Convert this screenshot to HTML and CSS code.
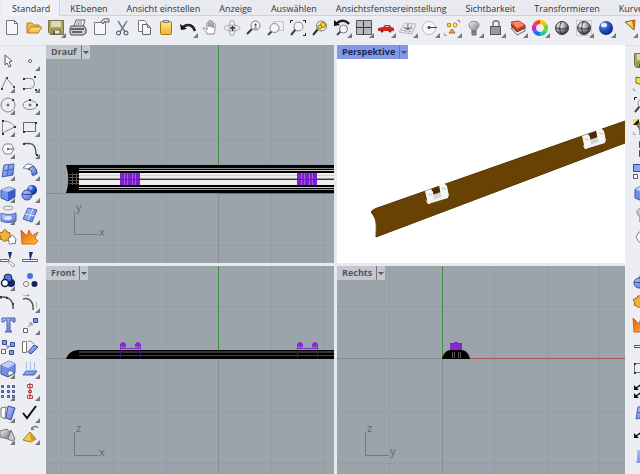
FILE: index.html
```
<!DOCTYPE html>
<html lang="de">
<head>
    <meta charset="UTF-8">
    <meta name="viewport" content="width=device-width, initial-scale=1.0">
    <title>Ansichtsfenster</title>
    <link rel="stylesheet" href="styles.css">
</head>
<body>

    <!-- Icon set, every icon on a 22 x 22 grid -->
    <svg class="sprite" aria-hidden="true">
        <defs>
            <linearGradient id="blue" x1="0" y1="0" x2="1" y2="1"><stop offset="0" stop-color="#b9c9fa"/><stop offset="1" stop-color="#5273d6"/></linearGradient>
            <linearGradient id="gold" x1="0" y1="0" x2="0" y2="1"><stop offset="0" stop-color="#ffe78a"/><stop offset="1" stop-color="#eeb53a"/></linearGradient>
            <linearGradient id="fire" x1="0" y1="0" x2="1" y2="1"><stop offset="0" stop-color="#e85d10"/><stop offset="1" stop-color="#ffc233"/></linearGradient>
            <linearGradient id="steel" x1="0" y1="0" x2="1" y2="1"><stop offset="0" stop-color="#f4f4f4"/><stop offset="1" stop-color="#777"/></linearGradient>
            <radialGradient id="ball" cx=".35" cy=".3" r=".7"><stop offset="0" stop-color="#fff"/><stop offset=".5" stop-color="#aaa"/><stop offset="1" stop-color="#333"/></radialGradient>
            <radialGradient id="blueball" cx=".35" cy=".3" r=".7"><stop offset="0" stop-color="#cfe0ff"/><stop offset=".4" stop-color="#2e62cc"/><stop offset="1" stop-color="#0a2c80"/></radialGradient>
        </defs>
        <symbol id="new" viewBox="0 0 22 22"><path d="M5.500 3.500h8l3 3v11h-11z" fill="#f7f7f7" stroke="#777"/><path d="M13.500 3.500v3h3" fill="none" stroke="#777"/></symbol>
        <symbol id="open" viewBox="0 0 22 22"><path d="M4 16V6h5l2 2h5v3" fill="#f2bd3d" stroke="#b1801c"/><path d="M4 16l4-6h11l-4 6z" fill="url(#gold)" stroke="#b1801c"/></symbol>
        <symbol id="save" viewBox="0 0 22 22"><path d="M3.500 3.500h15v14h-13l-2-2z" fill="#aaa45a" stroke="#77744a"/><path d="M6 4h10v6H6z" fill="#dcdabb"/><path d="M7 13h8v4H7z" fill="#eee" stroke="#66643a"/><path d="M8 14h2v3H8z" fill="#555"/></symbol>
        <symbol id="print" viewBox="0 0 22 22"><path d="M7 9l2-6h9l-2 7" fill="#f4f4f4" stroke="#666"/><path d="M10 5h5M9 7h6" stroke="#888"/><path d="M4 9h13l2 3v4l-3 2H4l-1-2v-5z" fill="#ccc" stroke="#444"/><path d="M4 12h13M5 15h10" stroke="#444" stroke-width="1.500"/></symbol>
        <symbol id="export" viewBox="0 0 22 22"><path d="M5.500 5.500h11v12h-11z" fill="#f7f7f7" stroke="#777"/><path d="M12 5c1-3 5-4 8-3v3h-3c-1-1-2-1-3 2z" fill="#ddd" stroke="#555"/></symbol>
        <symbol id="cut" viewBox="0 0 22 22"><path d="M7 4l7 11M16 4L9 15" stroke="#788090" stroke-width="1.500"/><circle cx="7.500" cy="16" r="2" fill="none" stroke="#34415e"/><circle cx="15" cy="16" r="2" fill="none" stroke="#34415e"/></symbol>
        <symbol id="copy" viewBox="0 0 22 22"><path d="M5.500 3.500h6l2 2v9h-8z" fill="#fff" stroke="#777"/><path d="M9.500 7.500h5l3 3v7h-8z" fill="#f4f4f4" stroke="#666"/><path d="M14.500 7.500v3h3" fill="none" stroke="#777"/></symbol>
        <symbol id="paste" viewBox="0 0 22 22"><rect x="5.500" y="4.500" width="11" height="13" rx="1" fill="url(#gold)" stroke="#a87812"/><path d="M8.500 3.500h5v2h-5z" fill="#ddd" stroke="#777"/></symbol>
        <symbol id="undo" viewBox="0 0 22 22"><path d="M6 10c5-4 10-2 12 4" fill="none" stroke="#222" stroke-width="2.500"/><path d="M3 7l1 6 6-1z" fill="#111"/></symbol>
        <symbol id="hand" viewBox="0 0 22 22"><path d="M8 17c0-3-5-5-4-6s2 0 4 2V6c0-1 2-1 2 0v4-6c0-1 2-1 2 0v6-5c0-1 2-1 2 0v6-4c0-1 2-1 2 0v5c0 2-1 3-1 5z" fill="#fff" stroke="#888"/></symbol>
        <symbol id="orbit" viewBox="0 0 22 22"><ellipse cx="11" cy="11" rx="8" ry="3" fill="none" stroke="#aaa"/><ellipse cx="11" cy="11" rx="3" ry="8" fill="none" stroke="#aaa"/><path d="M9 11h5M11.500 9v5" stroke="#333" stroke-width="1.500"/></symbol>
        <symbol id="zoom" viewBox="0 0 22 22"><path d="M9 12l-5 5" stroke="#333" stroke-width="2"/><circle cx="12.500" cy="8.500" r="4.500" fill="#f7f8fa" stroke="#777"/><path d="M11 8h3M12.500 6.500v3M11 11h3" stroke="#555"/></symbol>
        <symbol id="zoomwin" viewBox="0 0 22 22"><path d="M8.500 4.500h10v9h-10z" fill="none" stroke="#999" stroke-dasharray="1 1"/><path d="M7 14l-4 4" stroke="#444" stroke-width="2"/><circle cx="9.500" cy="11" r="4.500" fill="#f4f5f7" stroke="#888"/></symbol>
        <symbol id="zoomext" viewBox="0 0 22 22"><path d="M3.500 6V3.500H6M16 3.500h2.500V6M18.500 16v2.500H16" fill="none" stroke="#222"/><path d="M9 12l-5 6" stroke="#444" stroke-width="2"/><circle cx="11.500" cy="9.500" r="4.500" fill="#f4f5f7" stroke="#888"/></symbol>
        <symbol id="zoomsel" viewBox="0 0 22 22"><path d="M9 12l-5 6" stroke="#333" stroke-width="2"/><circle cx="12.500" cy="9" r="5" fill="#eee" stroke="#777"/><circle cx="14" cy="8" r="2.500" fill="#ffd91f" stroke="#a07800"/><circle cx="11" cy="10" r="2" fill="#ffd91f" stroke="#a07800"/></symbol>
        <symbol id="zoomback" viewBox="0 0 22 22"><path d="M10 14l-4 4" stroke="#444" stroke-width="2"/><circle cx="12.500" cy="12" r="4" fill="#f4f5f7" stroke="#777"/><path d="M6 6c4-3 9-3 12 1" fill="none" stroke="#222" stroke-width="2.500"/><path d="M3 3v6l6-1z" fill="#111"/></symbol>
        <symbol id="four" viewBox="0 0 22 22"><path d="M3.500 3.500h15v14h-15z" fill="#b9b9b9" stroke="#555"/><path d="M10.500 4v14M3 10.500h15" stroke="#333"/></symbol>
        <symbol id="car" viewBox="0 0 22 22"><path d="M3 11l5-1 2-2h5l1 2 3 1v3H3z" fill="#db2020"/><path d="M10 10l1-1h3v1z" fill="#efc3c3"/><circle cx="7" cy="14" r="1.500" fill="#444"/><circle cx="15" cy="14" r="1.500" fill="#444"/></symbol>
        <symbol id="cplane" viewBox="0 0 22 22"><path d="M2 15L8 6l11 1-4 10zM5 10l12 2M11 6l-3 10M15 7l-3 9M3 13l13 2" fill="none" stroke="#bbb"/><path d="M7 11l4 1 4-2M11 12V7" fill="none" stroke="#777"/><circle cx="11" cy="12" r="1" fill="#a33"/></symbol>
        <symbol id="cset" viewBox="0 0 22 22"><circle cx="10" cy="11" r="6.500" fill="#f8f8f9" stroke="#bbb"/><path d="M10 10.500h8" stroke="#444"/><circle cx="10" cy="10.500" r="1.500" fill="#444"/></symbol>
        <symbol id="snap" viewBox="0 0 22 22"><path d="M16 3.500h2.500V6M3.500 16v2.500H6" fill="none" stroke="#999"/><path d="M6.500 6.500h3v3h-3z" fill="#ffd631" stroke="#b58c10"/><circle cx="14" cy="8" r="2" fill="#ffe680" stroke="#b58c10"/><path d="M8 16l3-4 3 4z" fill="#ffb52e" stroke="#a5651a"/></symbol>
        <symbol id="bulb" viewBox="0 0 22 22"><path d="M9 14c0-2-3-3-3-6 0-5 10-5 10 0 0 3-3 4-3 6z" fill="url(#steel)" stroke="#888"/><path d="M9 14h4v4H9z" fill="#888" stroke="#666"/></symbol>
        <symbol id="lock" viewBox="0 0 22 22"><path d="M8 10V6c0-3 6-3 6 0v4" fill="none" stroke="#777" stroke-width="1.500"/><rect x="5.500" y="9.500" width="10" height="8" fill="#999" stroke="#555"/></symbol>
        <symbol id="layers" viewBox="0 0 22 22"><path d="M4 11l6 7 8-4v-4z" fill="#eee" stroke="#666"/><path d="M4 8l6 7 8-4V8z" fill="#5b8dd0" stroke="#555"/><path d="M4 6l6 7 8-4v2l-8 4-6-6z" fill="#b62c18"/><path d="M4 5l8-1 6 4-8 4z" fill="#ff8a61" stroke="#c23a24"/></symbol>
        <symbol id="wheel" viewBox="0 0 22 22"><g fill="none" stroke-width="4"><path d="M11 5a6 6 0 0 1 5.200 3" stroke="#ffc400"/><path d="M16.200 8a6 6 0 0 1 0 6" stroke="#6bd62c"/><path d="M16.200 14a6 6 0 0 1-5.200 3" stroke="#1bc7b5"/><path d="M11 17a6 6 0 0 1-5.200-3" stroke="#276cf0"/><path d="M5.800 14a6 6 0 0 1 0-6" stroke="#c12be0"/><path d="M5.800 8a6 6 0 0 1 5.200-3" stroke="#ff3e35"/></g></symbol>
        <symbol id="sphere" viewBox="0 0 22 22"><circle cx="11" cy="11" r="6.500" fill="url(#ball)" stroke="#444"/><path d="M5 10.500c4 2 8 2 12 0M11 4c-3 4-3 10 0 14" fill="none" stroke="#333"/></symbol>
        <symbol id="spheresel" viewBox="0 0 22 22"><path d="M3.500 3.500h15v15h-15z" fill="none" stroke="#aaa" stroke-dasharray="1 1"/><use href="#sphere"/></symbol>
        <symbol id="render" viewBox="0 0 22 22"><circle cx="11" cy="11" r="7" fill="url(#blueball)"/><ellipse cx="9" cy="8" rx="3" ry="2" fill="#eaf2ff"/></symbol>
        <symbol id="spot" viewBox="0 0 22 22"><path d="M8 5l10-2-1 10z" fill="url(#gold)" stroke="#8a5a10"/><path d="M15 4l3-1-1 10z" fill="#c56e13"/></symbol>

        <symbol id="arrow" viewBox="0 0 22 22"><path d="M8 5v10l2-2 2 4 2-1-2-4 3-1z" fill="#fff" stroke="#555"/></symbol>
        <symbol id="point" viewBox="0 0 22 22"><circle cx="11" cy="11" r="1.500" fill="#fff" stroke="#666"/></symbol>
        <symbol id="polyline" viewBox="0 0 22 22"><path d="M5 16L9.500 6l7.500 9" fill="none" stroke="#888"/><path d="M4 16h2v2H4zM9 5h2v2H9zM16 14h2v2h-2z" fill="#444"/></symbol>
        <symbol id="curve" viewBox="0 0 22 22"><path d="M5 6.500h6c6 0 6 10 0 10H5" fill="none" stroke="#888"/><path d="M4 6h2v2H4zM15 4h2v2h-2zM4 16h2v2H4zM16 17h2v2h-2z" fill="#333"/></symbol>
        <symbol id="circle" viewBox="0 0 22 22"><circle cx="11" cy="11" r="7" fill="none" stroke="#888"/><circle cx="11" cy="11" r="1" fill="#fff" stroke="#444"/><path d="M15 5h2v2h-2z" fill="#333"/></symbol>
        <symbol id="ellipse" viewBox="0 0 22 22"><ellipse cx="11" cy="11" rx="7" ry="4.500" fill="none" stroke="#888"/><circle cx="11" cy="11" r="1" fill="#fff" stroke="#444"/><path d="M10 5h2v2h-2zM17 10h2v2h-2z" fill="#333"/></symbol>
        <symbol id="arc" viewBox="0 0 22 22"><path d="M5.500 17V5c6 0 10 2 12 6z" fill="none" stroke="#888"/><path d="M5 17h2v2H5zM5 4h2v2H5zM17 10h2v2h-2z" fill="#333"/></symbol>
        <symbol id="rect" viewBox="0 0 22 22"><path d="M4.500 6.500h12v9h-12z" fill="none" stroke="#666"/><path d="M4 15h2v2H4zM16 6h2v2h-2z" fill="#333"/></symbol>
        <symbol id="hex" viewBox="0 0 22 22"><path d="M5 11l3-5h6l3 5-3 5H8z" fill="#f8f8f8" stroke="#888"/><circle cx="11" cy="11" r="1" fill="#333"/><path d="M11 11h6" stroke="#666"/></symbol>
        <symbol id="fillet" viewBox="0 0 22 22"><path d="M5 5.500h5c5 0 7 3 7 11" fill="none" stroke="#555" stroke-width="1.500"/><path d="M4 5h2v2H4zM17 16h2v2h-2z" fill="#333"/></symbol>
        <symbol id="surface" viewBox="0 0 22 22"><path d="M7 5l10-1-1 11-11 2z" fill="url(#blue)" stroke="#4a62b0"/><path d="M12 5l-2 11M6 11l11-2" stroke="#4a62b0"/></symbol>
        <symbol id="sweep" viewBox="0 0 22 22"><path d="M4 8l4-4c6 0 9 3 10 10l-4 2c0-5-4-7-9-8z" fill="#fff" stroke="#777"/><path d="M9 9l5-3c3 2 4 5 4 7l-5 2c0-4-1-5-4-6z" fill="url(#blue)" stroke="#334a96"/></symbol>
        <symbol id="box" viewBox="0 0 22 22"><path d="M4 8l8-3 6 2v8l-7 4-7-3z" fill="#6f90ee" stroke="#3b54a5"/><path d="M4 8l8-3 6 2-7 3z" fill="#bccbfc"/><path d="M11 10l7-3v8l-7 4z" fill="#3a5cc0"/></symbol>
        <symbol id="balls" viewBox="0 0 22 22"><circle cx="13" cy="8" r="5" fill="url(#blueball)"/><circle cx="8" cy="13" r="5" fill="url(#blue)" stroke="#334a96"/><path d="M3 12.500h10" stroke="#334a96"/></symbol>
        <symbol id="extrude" viewBox="0 0 22 22"><ellipse cx="11" cy="4" rx="5" ry="2" fill="none" stroke="#999"/><path d="M4 9c5 2 10 2 15 0v8c-5 2-10 2-15 0z" fill="url(#blue)" stroke="#4a62b0"/><ellipse cx="11" cy="14" rx="4" ry="2" fill="#dbe3fb"/></symbol>
        <symbol id="mesh" viewBox="0 0 22 22"><path d="M9 4l9 2-5 12-9-3z" fill="url(#blue)" stroke="#4a62b0"/><path d="M6 10l10 2M14 5L9 16" stroke="#dfe6fc"/></symbol>
        <symbol id="puzzle" viewBox="0 0 22 22"><path d="M3 7l3-1c0-3 4-3 4 0l3 1v3c3 0 3 3 0 3v2l-4-1c0 2-3 2-3 0l-3-1 1-3c-2 0-2-3-1-3z" fill="#f3b03a" stroke="#a4660c"/><path d="M11 12l3-1c0-2 3-2 3 0l2 2-1 5-3-1c0 2-3 2-3-1z" fill="#fff" stroke="#777"/></symbol>
        <symbol id="explode" viewBox="0 0 22 22"><path d="M2 4l6 6 2-6 3 6 6-4-3 6 3 3-3 3H3z" fill="url(#fire)" stroke="#d06a12"/></symbol>
        <symbol id="trim" viewBox="0 0 22 22"><path d="M3.500 11.500h8v2h-8z" fill="#fff" stroke="#666"/><path d="M11 4h4l-2 8z" fill="#1c2e78"/><path d="M13 13l5 4-2 2-5-5z" fill="#fff" stroke="#999"/></symbol>
        <symbol id="split" viewBox="0 0 22 22"><path d="M3.500 11.500h15v2h-15z" fill="#fff" stroke="#666"/><path d="M10 4h4l-3 9z" fill="#1c2e78"/></symbol>
        <symbol id="bool" viewBox="0 0 22 22"><circle cx="14" cy="13" r="4" fill="#142864"/><circle cx="11" cy="8" r="4" fill="#4e78e0" stroke="#16224e"/><circle cx="8" cy="13" r="3.500" fill="#fff" stroke="#16224e" stroke-width="1.500"/></symbol>
        <symbol id="group" viewBox="0 0 22 22"><circle cx="11" cy="6" r="3" fill="#4b6fd8"/><circle cx="7" cy="14" r="2.500" fill="#fff" stroke="#777"/><circle cx="15.500" cy="14" r="3" fill="#15265f"/></symbol>
        <symbol id="match" viewBox="0 0 22 22"><path d="M3 6c7-3 14 2 13 11" fill="none" stroke="#555" stroke-width="1.500"/><path d="M3 4h2v2H3zM9 5h2v2H9zM15 11h2v2h-2z" fill="#333"/></symbol>
        <symbol id="offset" viewBox="0 0 22 22"><path d="M4 7c6-2 11 3 10 11" fill="none" stroke="#555" stroke-width="1.500"/><path d="M4 3.500h7M17.500 10v6" stroke="#bbb"/><circle cx="9" cy="3.500" r="1" fill="#888"/></symbol>
        <symbol id="text" viewBox="0 0 22 22"><path d="M5 4h13v4h-2l-1-2h-2v10l2 2H8l2-2V6H8L7 8H5z" fill="url(#blue)" stroke="#4a62b0"/></symbol>
        <symbol id="move" viewBox="0 0 22 22"><path d="M14.500 4.500h4v4h-4z" fill="#7b9af0" stroke="#334a96"/><path d="M4.500 14.500h4v4h-4z" fill="#fff" stroke="#666"/><path d="M9 13l4-4M10 9h3v3" fill="none" stroke="#888"/></symbol>
        <symbol id="copies" viewBox="0 0 22 22"><path d="M5.500 4.500h4v4h-4zM13.500 6.500h4v4h-4zM12.500 14.500h4v4h-4z" fill="#7b9af0" stroke="#334a96"/><path d="M4.500 13.500h4v4h-4z" fill="#fff" stroke="#666"/><path d="M9 13l4-3M9 10h3" stroke="#777"/></symbol>
        <symbol id="rotate" viewBox="0 0 22 22"><path d="M3.500 5.500h4v11h-4z" fill="#fff" stroke="#777"/><path d="M15 9l4 2-7 7-3-2z" fill="url(#blue)" stroke="#334a96"/><path d="M9 5c3 0 4 1 6 3" fill="none" stroke="#888"/></symbol>
        <symbol id="solid" viewBox="0 0 22 22"><path d="M4 7l8-4 6 3v9l-7 4-7-3z" fill="#6f90ee" stroke="#3b54a5"/><path d="M4 7l8-4 6 3-7 4z" fill="#c2d0fc"/><path d="M11 13h5v3l-5 2z" fill="#fff" stroke="#777"/></symbol>
        <symbol id="project" viewBox="0 0 22 22"><path d="M4 17l3-4h11l-3 4z" fill="url(#blue)" stroke="#4a62b0"/><path d="M7.500 4v9M11.500 4v9M15.500 4v9" stroke="#a9bae8"/></symbol>
        <symbol id="array" viewBox="0 0 22 22"><path d="M4.500 5.500h2v2h-2zM10.500 5.500h2v2h-2zM15.500 5.500h2v2h-2zM4.500 10.500h2v2h-2zM10.500 10.500h2v2h-2zM15.500 10.500h2v2h-2zM10.500 15.500h2v2h-2zM15.500 15.500h2v2h-2z" fill="#8aa1ea" stroke="#3c4e96"/><path d="M4.500 15.500h2v2h-2z" fill="#fff" stroke="#444"/></symbol>
        <symbol id="align" viewBox="0 0 22 22"><path d="M8.500 4.500h5v3h-5zM9.500 10.500h3v2h-3zM8.500 15.500h5v3h-5z" fill="#f7e4e4" stroke="#a55"/><path d="M11 3v16" stroke="#c22"/></symbol>
        <symbol id="bend" viewBox="0 0 22 22"><path d="M4 6l5-1-1 12-4-2z" fill="#fff" stroke="#777"/><path d="M11 4l7 2-4 12-5-2z" fill="url(#blue)" stroke="#3c4e96"/></symbol>
        <symbol id="check" viewBox="0 0 22 22"><path d="M4 11l4 5L17 4" fill="none" stroke="#111" stroke-width="2"/></symbol>
        <symbol id="draft" viewBox="0 0 22 22"><path d="M3 7l7-2 3 3-2 7-8-2z" fill="url(#steel)" stroke="#777"/><path d="M14 6l4 9-3 2-4-2z" fill="#ccc" stroke="#777"/></symbol>
        <symbol id="pyramid" viewBox="0 0 22 22"><path d="M11 8l6 7-5 3-8-2z" fill="#f7cc4a" stroke="#9a7b22"/><path d="M11 8l6 7-5 3z" fill="#cf9c24"/><path d="M13 4c2-2 5-2 6 0" fill="none" stroke="#777" stroke-width="1.500"/><path d="M12 3v3h4z" fill="#777"/></symbol>

        <symbol id="yellow" viewBox="0 0 22 22"><path d="M5 5l10 2v7L5 11z" fill="#f5e520" stroke="#666"/><path d="M2.500 16v2.500H5" fill="none" stroke="#aaa"/></symbol>
        <symbol id="invert" viewBox="0 0 22 22"><path d="M2 3h6v6H2z" fill="#111"/><path d="M2 3h6L2 9z" fill="#f5e520"/><path d="M6 9c0-3 9-3 9 0l-3 5v5H9v-5z" fill="#888" stroke="#555"/><path d="M2.500 16v2.500H5" fill="none" stroke="#aaa"/></symbol>
        <symbol id="stack" viewBox="0 0 22 22"><path d="M8.500 3.500h8v6h-8zM8.500 12.500h8v6h-8z" fill="#7a8fd0" stroke="#334a96"/></symbol>
        <symbol id="swap" viewBox="0 0 22 22"><path d="M2.500 4.500h12v7h-12z" fill="#8ba5f3" stroke="#334a96"/><path d="M2.500 14.500h4v4h-4z" fill="#fff" stroke="#555"/></symbol>
        <symbol id="bar" viewBox="0 0 22 22"><path d="M3.500 9.500h15v2h-15z" fill="#fff" stroke="#555"/></symbol>
        <symbol id="frame" viewBox="0 0 22 22"><path d="M3.500 5.500h14v9h-14z" fill="none" stroke="#777"/><path d="M3 14h2v2H3zM3 5h2v2H3z" fill="#333"/></symbol>
        <symbol id="arrows" viewBox="0 0 22 22"><path d="M11 4L5 8M11 12l-6 4" stroke="#111" stroke-width="1.500"/><path d="M3 5v5h5zM3 13v5h5z" fill="#111"/></symbol>
        <symbol id="back" viewBox="0 0 22 22"><path d="M11 8l-6 4" stroke="#111" stroke-width="1.500"/><path d="M3 9v5h5z" fill="#111"/></symbol>
        <symbol id="sheet" viewBox="0 0 22 22"><path d="M6 4h12v13H5l1-3z" fill="url(#blue)"/></symbol>
    </svg>

    <div class="app">
        <nav class="tabs">
            <button class="tab active">Standard</button>
            <button class="tab">KEbenen</button>
            <button class="tab">Ansicht einstellen</button>
            <button class="tab">Anzeige</button>
            <button class="tab">Auswählen</button>
            <button class="tab">Ansichtsfenstereinstellung</button>
            <button class="tab">Sichtbarkeit</button>
            <button class="tab">Transformieren</button>
            <button class="tab">Kurven</button>
        </nav>

        <div class="toolbar">
            <button class="tool" aria-label="Neu"><svg><use href="#new"/></svg></button>
            <button class="tool" aria-label="Öffnen"><svg><use href="#open"/></svg></button>
            <button class="tool more" aria-label="Speichern"><svg><use href="#save"/></svg></button>
            <button class="tool" aria-label="Drucken"><svg><use href="#print"/></svg></button>
            <button class="tool" aria-label="Exportieren"><svg><use href="#export"/></svg></button>
            <button class="tool" aria-label="Ausschneiden"><svg><use href="#cut"/></svg></button>
            <button class="tool" aria-label="Kopieren"><svg><use href="#copy"/></svg></button>
            <button class="tool" aria-label="Einfügen"><svg><use href="#paste"/></svg></button>
            <button class="tool more" aria-label="Rückgängig"><svg><use href="#undo"/></svg></button>
            <button class="tool" aria-label="Verschieben"><svg><use href="#hand"/></svg></button>
            <button class="tool" aria-label="Drehen"><svg><use href="#orbit"/></svg></button>
            <button class="tool" aria-label="Zoom"><svg><use href="#zoom"/></svg></button>
            <button class="tool" aria-label="Zoom Fenster"><svg><use href="#zoomwin"/></svg></button>
            <button class="tool" aria-label="Zoom Grenzen"><svg><use href="#zoomext"/></svg></button>
            <button class="tool" aria-label="Zoom Auswahl"><svg><use href="#zoomsel"/></svg></button>
            <button class="tool more" aria-label="Ansicht zurück"><svg><use href="#zoomback"/></svg></button>
            <button class="tool more" aria-label="Vier Ansichten"><svg><use href="#four"/></svg></button>
            <button class="tool more" aria-label="Ansicht rechts"><svg><use href="#car"/></svg></button>
            <button class="tool more" aria-label="Konstruktionsebene"><svg><use href="#cplane"/></svg></button>
            <button class="tool more" aria-label="Ebene einstellen"><svg><use href="#cset"/></svg></button>
            <button class="tool more" aria-label="Objektfang"><svg><use href="#snap"/></svg></button>
            <button class="tool more" aria-label="Ausblenden"><svg><use href="#bulb"/></svg></button>
            <button class="tool more" aria-label="Sperren"><svg><use href="#lock"/></svg></button>
            <button class="tool more" aria-label="Ebenen"><svg><use href="#layers"/></svg></button>
            <button class="tool more" aria-label="Farben"><svg><use href="#wheel"/></svg></button>
            <button class="tool" aria-label="Schattiert"><svg><use href="#sphere"/></svg></button>
            <button class="tool more" aria-label="Auswahl schattieren"><svg><use href="#spheresel"/></svg></button>
            <button class="tool more" aria-label="Rendern"><svg><use href="#render"/></svg></button>
            <button class="tool more" aria-label="Scheinwerfer"><svg><use href="#spot"/></svg></button>
        </div>

        <div class="workspace">
            <aside class="palette">
                <button class="tool" aria-label="Auswahl"><svg><use href="#arrow"/></svg></button>
                <button class="tool more" aria-label="Punkt"><svg><use href="#point"/></svg></button>
                <button class="tool more" aria-label="Polylinie"><svg><use href="#polyline"/></svg></button>
                <button class="tool more" aria-label="Kurve"><svg><use href="#curve"/></svg></button>
                <button class="tool more" aria-label="Kreis"><svg><use href="#circle"/></svg></button>
                <button class="tool more" aria-label="Ellipse"><svg><use href="#ellipse"/></svg></button>
                <button class="tool more" aria-label="Bogen"><svg><use href="#arc"/></svg></button>
                <button class="tool more" aria-label="Rechteck"><svg><use href="#rect"/></svg></button>
                <button class="tool more" aria-label="Polygon"><svg><use href="#hex"/></svg></button>
                <button class="tool more" aria-label="Kurve verrunden"><svg><use href="#fillet"/></svg></button>
                <button class="tool more" aria-label="Fläche"><svg><use href="#surface"/></svg></button>
                <button class="tool more" aria-label="Aufziehen"><svg><use href="#sweep"/></svg></button>
                <button class="tool more" aria-label="Quader"><svg><use href="#box"/></svg></button>
                <button class="tool more" aria-label="Kugel"><svg><use href="#balls"/></svg></button>
                <button class="tool more" aria-label="Extrudieren"><svg><use href="#extrude"/></svg></button>
                <button class="tool more" aria-label="Polygonnetz"><svg><use href="#mesh"/></svg></button>
                <button class="tool" aria-label="Verbinden"><svg><use href="#puzzle"/></svg></button>
                <button class="tool" aria-label="Zerlegen"><svg><use href="#explode"/></svg></button>
                <button class="tool" aria-label="Trimmen"><svg><use href="#trim"/></svg></button>
                <button class="tool" aria-label="Teilen"><svg><use href="#split"/></svg></button>
                <button class="tool more" aria-label="Boolesche Operation"><svg><use href="#bool"/></svg></button>
                <button class="tool" aria-label="Gruppieren"><svg><use href="#group"/></svg></button>
                <button class="tool" aria-label="Angleichen"><svg><use href="#match"/></svg></button>
                <button class="tool more" aria-label="Versetzen"><svg><use href="#offset"/></svg></button>
                <button class="tool" aria-label="Text"><svg><use href="#text"/></svg></button>
                <button class="tool more" aria-label="Objekt verschieben"><svg><use href="#move"/></svg></button>
                <button class="tool" aria-label="Objekt kopieren"><svg><use href="#copies"/></svg></button>
                <button class="tool" aria-label="Objekt drehen"><svg><use href="#rotate"/></svg></button>
                <button class="tool more" aria-label="Volumenkörper"><svg><use href="#solid"/></svg></button>
                <button class="tool more" aria-label="Projizieren"><svg><use href="#project"/></svg></button>
                <button class="tool more" aria-label="Anordnung"><svg><use href="#array"/></svg></button>
                <button class="tool more" aria-label="Ausrichten"><svg><use href="#align"/></svg></button>
                <button class="tool more" aria-label="Biegen"><svg><use href="#bend"/></svg></button>
                <button class="tool more" aria-label="Prüfen"><svg><use href="#check"/></svg></button>
                <button class="tool more" aria-label="Formschräge"><svg><use href="#draft"/></svg></button>
                <button class="tool more" aria-label="Aktualisieren"><svg><use href="#pyramid"/></svg></button>
            </aside>

            <main class="views">
                <section class="view">
                    <svg class="scene" viewBox="0 0 288 218" preserveAspectRatio="xMinYMin slice">
                        <path class="grid" d="M15.500 0v218M67.500 0v218M120.500 0v218M225.500 0v218M277.500 0v218M0 43.500h288M0 95.500h288M0 200.500h288"/>
                        <path class="origin" d="M0 148.500h173M172.500 148v70"/>
                        <path class="green" d="M172.500 0v121"/>
                        <path class="red" d="M173 148.500h115"/>
                        <path d="M20 120h268v28H20c3-9 3-19 0-28z"/>
                        <path d="M33 128h255v12H33z" fill="#ededed"/>
                        <path d="M33 123.500h255" stroke="#888"/>
                        <path d="M33 125.500h255M33 142.500h255" stroke="#ccc"/>
                        <path d="M33 144.500h255" stroke="#999"/>
                        <path d="M33 130.500h255" stroke="#ccc"/>
                        <path d="M33 134h255" stroke="#333" stroke-width="2"/>
                        <path d="M33 133.500h255" stroke="#999"/>
                        <path d="M23 129.500h10M23 132.500h10M23 135.500h10M23 138.500h10M26.500 128v12M30.500 128v12" stroke="#555"/>
                        <g id="clip-top">
                            <path d="M74 128h20v12H74z" fill="#7d20cf"/>
                            <path d="M78.500 128v12M81.500 128v12M86.500 128v12M89.500 128v12" stroke="#a45be6"/>
                            <path d="M74 134.500h20" stroke="#6a18b5"/>
                        </g>
                        <use href="#clip-top" x="177"/>
                        <path class="axis" d="M28.500 166v23.500H52"/>
                        <text class="axis-name" x="30" y="166">y</text>
                        <text class="axis-name" x="53" y="191">x</text>
                    </svg>
                    <div class="title">
                        <button class="name">Drauf</button>
                        <button class="menu" aria-label="Menü Drauf"></button>
                    </div>
                </section>

                <section class="view shaded">
                    <svg class="scene" viewBox="0 0 288 218" preserveAspectRatio="xMinYMin slice">
                        <path d="M34 167c2-3 6-4 9-5L288 76v22L39 192c0-6 2-15-2-20z" fill="#674203"/>
                        <path d="M34 167c2-3 6-4 9-5L288 76M39 192L288 98M34 167c7 7 5 16 5 25" fill="none" stroke="#553808"/>
                        <g id="clip-3d">
                            <path d="M94 145l9-4 2 6-9 4z" fill="#4c2c08"/>
                            <path d="M95 150l9-3 2 3 5 2-20 7-2-3z" fill="#d4d4d4"/>
                            <path d="M88 146l6-2 2 3 1 7-4 2v3h-2z" fill="#f4f4f4"/>
                            <path d="M102 140l5-2 3 3 2 10-4 2-4-2z" fill="#f4f4f4"/>
                            <path d="M91 156l4-1 16-5v3l-20 6z" fill="#f4f4f4"/>
                            <path d="M91 149l4 1M105 143l4 1" fill="none" stroke="#c8c8c8"/>
                        </g>
                        <use href="#clip-3d" x="157" y="-55"/>
                    </svg>
                    <div class="title">
                        <button class="name">Perspektive</button>
                        <button class="menu" aria-label="Menü Perspektive"></button>
                    </div>
                </section>

                <section class="view">
                    <svg class="scene" viewBox="0 0 288 208" preserveAspectRatio="xMinYMin slice">
                        <path class="grid" d="M15.500 0v208M67.500 0v208M120.500 0v208M225.500 0v208M277.500 0v208M0 40.500h288M0 145.500h288M0 197.500h288"/>
                        <path class="origin" d="M0 92.500h288M172.500 92v116"/>
                        <path class="green" d="M172.500 0v84"/>
                        <path d="M20 93c2-6 7-9 13-9h255v9z"/>
                        <path d="M33 86h255" stroke="#666"/>
                        <path d="M33 89.500h255" stroke="#444"/>
                        <g id="clip-front" fill="none" stroke="#842bd0">
                            <path d="M74.500 84v-6h5v3h-4M94.500 84v-6h-5v3h4M75 82.500h20"/>
                            <path d="M74.500 84v8M94.500 84v8" stroke="#3f1464"/>
                            <circle cx="77" cy="78.500" r="2" fill="#842bd0"/>
                            <circle cx="92" cy="78.500" r="2" fill="#842bd0"/>
                        </g>
                        <use href="#clip-front" x="177"/>
                        <path class="axis" d="M28.500 166v23.500H52"/>
                        <text class="axis-name" x="30" y="166">z</text>
                        <text class="axis-name" x="53" y="190">x</text>
                    </svg>
                    <div class="title">
                        <button class="name">Front</button>
                        <button class="menu" aria-label="Menü Front"></button>
                    </div>
                </section>

                <section class="view">
                    <svg class="scene" viewBox="0 0 288 208" preserveAspectRatio="xMinYMin slice">
                        <path class="grid" d="M52.500 0v208M157.500 0v208M210.500 0v208M262.500 0v208M0 40.500h288M0 145.500h288M0 197.500h288"/>
                        <path class="origin" d="M0 92.500h106M105.500 92v116"/>
                        <path class="green" d="M105.500 0v92"/>
                        <path class="red" d="M133 92.500h155"/>
                        <path d="M105 93c1-5 4-9 9-9h10c5 0 8 4 9 9z"/>
                        <path d="M115.500 86v6M117.500 86v6M121.500 86v6M123.500 86v6" stroke="#555"/>
                        <path d="M113 77h4v-1h4v1h4v7h-12z" fill="#842bd0"/>
                        <path class="axis" d="M28.500 166v23.500H52"/>
                        <text class="axis-name" x="30" y="166">z</text>
                        <text class="axis-name" x="53" y="189">y</text>
                    </svg>
                    <div class="title">
                        <button class="name">Rechts</button>
                        <button class="menu" aria-label="Menü Rechts"></button>
                    </div>
                </section>
            </main>

            <aside class="dock">
                <button class="tool" aria-label="Sichern"><svg><use href="#save"/></svg></button>
                <button class="tool" aria-label="Alle auswählen"><svg><use href="#yellow"/></svg></button>
                <button class="tool" aria-label="Alles zoomen"><svg><use href="#zoomext"/></svg></button>
                <button class="tool" aria-label="Auswahl umkehren"><svg><use href="#invert"/></svg></button>
                <button class="tool" aria-label="Stapeln"><svg><use href="#stack"/></svg></button>
                <button class="tool" aria-label="Tauschen"><svg><use href="#swap"/></svg></button>
                <button class="tool" aria-label="Körper"><svg><use href="#solid"/></svg></button>
                <button class="tool" aria-label="Anzeigen"><svg><use href="#bulb"/></svg></button>
                <button class="tool" aria-label="Vieleck"><svg><use href="#hex"/></svg></button>
                <button class="tool" aria-label="Einzelpunkt"><svg><use href="#point"/></svg></button>
                <button class="tool" aria-label="Vereinigung"><svg><use href="#balls"/></svg></button>
                <button class="tool" aria-label="Zusammenfügen"><svg><use href="#puzzle"/></svg></button>
                <button class="tool" aria-label="Auflösen"><svg><use href="#explode"/></svg></button>
                <button class="tool" aria-label="Linie"><svg><use href="#bar"/></svg></button>
                <button class="tool" aria-label="Rahmen"><svg><use href="#frame"/></svg></button>
                <button class="tool" aria-label="Richtung"><svg><use href="#arrows"/></svg></button>
                <button class="tool" aria-label="Patch"><svg><use href="#surface"/></svg></button>
                <button class="tool" aria-label="Umdrehen"><svg><use href="#back"/></svg></button>
                <button class="tool" aria-label="Ebene"><svg><use href="#sheet"/></svg></button>
            </aside>
        </div>
    </div>

</body>
</html>
```

FILE: styles.css
```
* {
    box-sizing: border-box;
}
body {
    margin: 0;
    background-color: #e8eaf0;
    font-family: "Open Sans", "Noto Sans", sans-serif;
    overflow: hidden;
}
button {
    margin: 0;
    padding: 0;
    border: none;
    background: none;
    font-family: inherit;
    color: inherit;
}
.sprite {
    position: absolute;
    width: 0;
    height: 0;
}
.app {
    display: flex;
    flex-direction: column;
    height: 100vh;
}

/* Tabs */
.tabs {
    display: flex;
    flex: none;
    height: 16px;
    padding-left: 2px;
    overflow: hidden;
}
.tab {
    flex: none;
    padding: 2px 9px 0 10px;
    border-bottom: 1px solid #ced2dc;
    font-size: 9px;
    line-height: 13px;
    color: #333;
    white-space: nowrap;
}
.tab.active {
    background-color: #eff1f6;
    border-right: 1px solid #ced2dc;
    border-bottom-color: #eff1f6;
}

/* Tool buttons */
.toolbar {
    display: flex;
    flex: none;
    height: 29px;
    padding: 1px 0 0 1px;
    background-color: #eceef3;
    overflow: hidden;
}
.tool {
    position: relative;
    display: flex;
    flex: none;
    justify-content: center;
    align-items: center;
    width: 22px;
    height: 22px;
}
.tool svg {
    flex: none;
    width: 22px;
    height: 22px;
}
.more::after {
    content: "";
    position: absolute;
    right: 1px;
    bottom: 1px;
    border-left: 5px solid transparent;
    border-bottom: 5px solid #777;
}

/* Work area */
.workspace {
    display: flex;
    flex: 1;
    min-height: 0;
}
.palette {
    display: grid;
    flex: none;
    grid-template-columns: 16px 22px;
    grid-auto-rows: 22px;
    column-gap: 3px;
    align-content: start;
    width: 46px;
    padding-top: 4px;
    overflow: hidden;
}
.palette .tool {
    width: auto;
}
.dock {
    flex: none;
    width: 15px;
    padding: 4px 0 0 6px;
    overflow: hidden;
}
.palette,
.dock {
    background-color: #eceef3;
    border-top: 1px solid #dcdfe7;
}
.views {
    display: grid;
    flex: 1;
    grid-template-columns: 1fr 1fr;
    grid-template-rows: 218fr 208fr;
    gap: 3px;
    min-width: 0;
}
.view {
    position: relative;
    min-width: 0;
    min-height: 0;
    background-color: #9ba3ab;
    overflow: hidden;
}
.shaded {
    background-color: #fff;
}
.scene {
    display: block;
    width: 100%;
    height: 100%;
}

/* Viewport title lies over the drawing */
.title {
    position: absolute;
    top: 0;
    left: 0;
    display: flex;
    height: 14px;
    background-color: #c3c8ce;
    color: #50565d;
}
.shaded .title {
    background-color: #8299ea;
    color: #1f2a4d;
}
.name {
    padding: 0 4px 0 5px;
    font-size: 9px;
    font-weight: bold;
    line-height: 14px;
}
.menu {
    display: flex;
    justify-content: center;
    align-items: center;
    width: 9px;
    border-left: 1px solid #777;
}
.menu::before {
    content: "";
    border: 3px solid transparent;
    border-top-color: #555;
    border-bottom: none;
}

/* Drawing */
.grid,
.origin,
.green,
.red,
.axis {
    fill: none;
}
.grid {
    stroke: #949ca5;
}
.origin {
    stroke: #858d94;
}
.green {
    stroke: #3d8f43;
}
.red {
    stroke: #a95258;
}
.axis {
    stroke: #737980;
}
.axis-name {
    font-size: 11px;
    fill: #646a71;
}
```
